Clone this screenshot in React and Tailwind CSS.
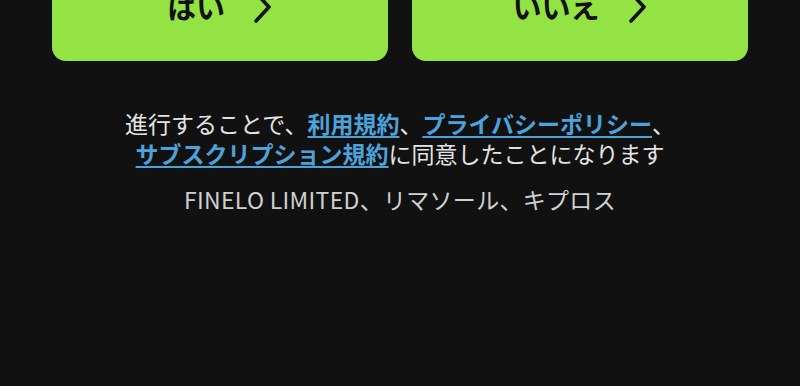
import React from 'react';

const Chevron = () => (
    <svg width="20" height="32" viewBox="0 0 20 32" fill="none" className="shrink-0">
        <path d="M3 2 L16 16 L3 30" stroke="#111111" strokeWidth="3.6" strokeLinecap="round" strokeLinejoin="round" />
    </svg>
);

const AnswerButton = ({ label }) => (
    <button className="flex-1 h-[108px] bg-[#93e345] rounded-[14px] flex items-center justify-center gap-7 text-[#111111] text-[29px] font-bold">
        <span>{label}</span>
        <Chevron />
    </button>
);

const App = () => {
    return (
        <div className="w-[800px] h-[386px] bg-[#111111] overflow-hidden font-['Noto_Sans_CJK_JP','Noto_Sans',sans-serif]">
            <div className="flex gap-6 px-[52px] -mt-[47px]">
                <AnswerButton label="はい" />
                <AnswerButton label="いいえ" />
            </div>

            <p className="mt-[47px] text-center text-[23px] leading-[30px] text-[#e4e4e4]">
                進行することで、<a href="#" className="text-[#4ca3dc] font-bold underline underline-offset-[3px]">利用規約</a>、<a href="#" className="text-[#4ca3dc] font-bold underline underline-offset-[3px]">プライバシーポリシー</a>、
                <br />
                <a href="#" className="text-[#4ca3dc] font-bold underline underline-offset-[3px]">サブスクリプション規約</a>に同意したことになります
            </p>

            <p className="mt-4 text-center text-[23px] leading-[30px] text-[#d0d0d0] tracking-[0.3px]">
                FINELO LIMITED、リマソール、キプロス
            </p>
        </div>
    );
};

export default App;
